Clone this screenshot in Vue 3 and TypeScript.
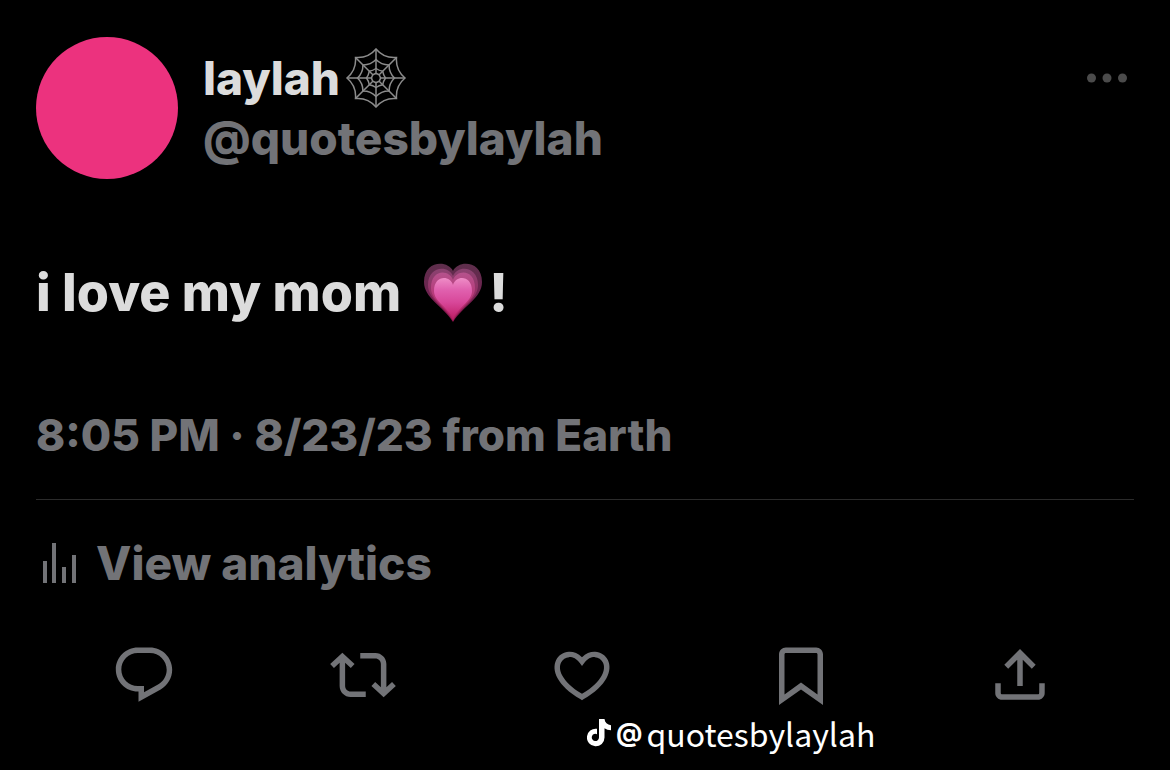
<script setup lang="ts">
interface Action {
  name: string
  path: string
}

const actions: Action[] = [
  {
    name: 'Reply',
    path: 'M1.751 10c0-4.42 3.584-8 8.005-8h4.366c4.49 0 8.129 3.64 8.129 8.13 0 2.96-1.607 5.68-4.196 7.11l-8.054 4.46v-3.69h-.067c-4.49.1-8.183-3.51-8.183-8.01zm8.005-6c-3.317 0-6.005 2.69-6.005 6 0 3.37 2.77 6.08 6.138 6.01l.351-.01h1.761v2.3l5.087-2.81c1.951-1.08 3.163-3.13 3.163-5.36 0-3.39-2.744-6.13-6.129-6.13H9.756z',
  },
  {
    name: 'Repost',
    path: 'M4.5 3.88l4.432 4.14-1.364 1.46L5.5 7.55V16c0 1.1.896 2 2 2H13v2H7.5c-2.209 0-4-1.79-4-4V7.55L1.432 9.48.068 8.02 4.5 3.88zM16.5 6H11V4h5.5c2.209 0 4 1.79 4 4v8.45l2.068-1.93 1.364 1.46-4.432 4.14-4.432-4.14 1.364-1.46 2.068 1.93V8c0-1.1-.896-2-2-2z',
  },
  {
    name: 'Like',
    path: 'M16.697 5.5c-1.222-.06-2.679.51-3.89 2.16l-.805 1.09-.806-1.09C9.984 6.01 8.526 5.44 7.304 5.5c-1.243.07-2.349.78-2.91 1.91-.552 1.12-.633 2.78.479 4.82 1.074 1.97 3.257 4.27 7.129 6.61 3.87-2.34 6.052-4.64 7.126-6.61 1.111-2.04 1.03-3.7.477-4.82-.561-1.13-1.666-1.84-2.908-1.91zm4.187 7.69c-1.351 2.48-4.001 5.12-8.379 7.67l-.503.3-.504-.3c-4.379-2.55-7.029-5.19-8.382-7.67-1.36-2.5-1.41-4.86-.514-6.67.887-1.79 2.647-2.91 4.601-3.01 1.651-.09 3.368.56 4.798 2.01 1.429-1.45 3.146-2.1 4.796-2.01 1.954.1 3.714 1.22 4.601 3.01.896 1.81.846 4.17-.514 6.67z',
  },
  {
    name: 'Bookmark',
    path: 'M4 4.5C4 3.12 5.119 2 6.5 2h11C18.881 2 20 3.12 20 4.5v18.44l-8-5.71-8 5.71V4.5zM6.5 4c-.276 0-.5.22-.5.5v14.56l6-4.29 6 4.29V4.5c0-.28-.224-.5-.5-.5h-11z',
  },
  {
    name: 'Share',
    path: 'M12 2.59l5.7 5.7-1.41 1.42L13 6.41V16h-2V6.41l-3.3 3.3-1.41-1.42L12 2.59zM21 15l-.02 3.51c0 1.38-1.12 2.49-2.5 2.49H5.5C4.11 21 3 19.88 3 18.5V15h2v3.5c0 .28.22.5.5.5h12.98c.28 0 .5-.22.5-.5L19 15h2z',
  },
]

const point = (radius: number, eighths: number): string => {
  const angle = (eighths * Math.PI) / 4
  return `${(30 + radius * Math.sin(angle)).toFixed(2)} ${(30 - radius * Math.cos(angle)).toFixed(2)}`
}

// One closed thread of the web; sag is the radius its curves are pulled to.
const thread = (radius: number, sag: number): string => {
  let d = `M${point(radius, 0)}`
  for (let i = 0; i < 8; i++) d += `Q${point(sag, i + 0.5)} ${point(radius, i + 1)}`
  return d + 'Z'
}

const threads: string[] = [thread(29, 21), thread(18.5, 14), thread(9.5, 8), thread(4.5, 4.5)]
const spokes: string = Array.from({ length: 8 }, (_, i) => `M${point(4.5, i)}L${point(29, i)}`).join('')
</script>

<template>
  <main class="page">
    <article class="post">
      <header class="head">
        <div class="avatar"></div>
        <div class="who">
          <div class="name">
            <span>laylah</span>
            <svg class="web" viewBox="0 0 60 60" aria-hidden="true">
              <path v-for="(t, i) in threads" :key="i" :d="t" />
              <path :d="spokes" />
            </svg>
          </div>
          <div class="handle">@quotesbylaylah</div>
        </div>
        <button class="more" type="button" aria-label="More">
          <svg viewBox="0 0 42 12" aria-hidden="true">
            <circle cx="5.5" cy="6" r="4.5" />
            <circle cx="21" cy="6" r="4.5" />
            <circle cx="36.5" cy="6" r="4.5" />
          </svg>
        </button>
      </header>

      <p class="body">
        <span>i love my mom</span>
        <svg class="pulse" viewBox="0 0 60 60" aria-hidden="true">
          <defs>
            <linearGradient id="h1" x1="0" y1="0" x2="0" y2="1">
              <stop offset="0" stop-color="#5e2f4c" />
              <stop offset="0.5" stop-color="#6e2350" />
              <stop offset="1" stop-color="#8c1048" />
            </linearGradient>
            <linearGradient id="h2" x1="0" y1="0" x2="0" y2="1">
              <stop offset="0" stop-color="#8a4370" />
              <stop offset="1" stop-color="#a01a58" />
            </linearGradient>
            <linearGradient id="h3" x1="0" y1="0" x2="0" y2="1">
              <stop offset="0" stop-color="#b5528c" />
              <stop offset="1" stop-color="#b81f64" />
            </linearGradient>
            <linearGradient id="h4" x1="0" y1="0" x2="0" y2="1">
              <stop offset="0" stop-color="#ee8cc6" />
              <stop offset="0.3" stop-color="#e060ae" />
              <stop offset="0.6" stop-color="#d8489a" />
              <stop offset="1" stop-color="#c02068" />
            </linearGradient>
          </defs>
          <path fill="url(#h1)" d="M30 8C25 -3 1 -3 1 19C1 35 20 43 30 59C40 43 59 35 59 19C59 -3 35 -3 30 8Z" />
          <path fill="url(#h2)" d="M30 13C26 2 5 2 5 22C5 36 21 43 30 58C39 43 55 36 55 22C55 2 34 2 30 13Z" />
          <path fill="url(#h3)" d="M30 17C26 6 8 6 8 25C8 37 22 43 30 57C38 43 52 37 52 25C52 6 34 6 30 17Z" />
          <path fill="url(#h4)" d="M30 22C27 12 11 12 11 28C11 38 23 43 30 55C37 43 49 38 49 28C49 12 33 12 30 22Z" />
        </svg>
        <span>!</span>
      </p>

      <p class="meta">8:05 PM · 8/23/23 from Earth</p>

      <a class="analytics" href="#analytics">
        <svg viewBox="0 0 34 42" aria-hidden="true">
          <path d="M0 19h4v22H0zM9 1h4v40H9zM19 25h4v16h-4zM29 13h4v28h-4z" />
        </svg>
        <span>View analytics</span>
      </a>

      <nav class="actions" aria-label="Post actions">
        <button v-for="a in actions" :key="a.name" type="button" :aria-label="a.name">
          <svg viewBox="0 0 24 24" aria-hidden="true"><path :d="a.path" /></svg>
        </button>
      </nav>
    </article>

    <footer class="credit">
      <svg viewBox="0 0 24 28" aria-hidden="true">
        <path d="M12 0h5.500c.4 3.600 2.800 5.800 6.500 6.200v5c-2.600 0-4.700-.7-6.500-2V18.500A8.800 8.800 0 1 1 10 9.800v5.400A3.600 3.600 0 1 0 12 18.500Z" />
      </svg>
      <span class="at">@</span>
      <span>quotesbylaylah</span>
    </footer>
  </main>
</template>

<style>
html,
body {
  background: #000;
}
</style>

<style scoped>
.page {
  box-sizing: border-box;
  min-height: 100vh;
  padding: 37px 36px 8px;
  background: #000;
  color: #dcdcdc;
  font-family: Inter, "Liberation Sans", sans-serif;
  font-size: 46px;
  font-weight: 800;
  line-height: 60px;
}

.head {
  display: flex;
  align-items: flex-start;
}

.avatar {
  flex: none;
  width: 142px;
  height: 142px;
  border-radius: 50%;
  background: #ec327e;
}

.who {
  flex: 1;
  margin: 11px 0 0 25px;
}

.name {
  display: flex;
  align-items: center;
  gap: 6px;
}

.web {
  width: 60px;
  height: 60px;
  fill: none;
  stroke: #8c8c8c;
  stroke-width: 1.5;
}

.handle,
.meta,
.analytics {
  color: #727377;
}

button {
  padding: 0;
  border: 0;
  background: none;
  color: #727377;
  cursor: pointer;
}

button svg {
  display: block;
  fill: currentColor;
}

.more {
  margin: 35px 6px 0 0;
  color: #4b4b4b;
}

.more svg {
  width: 42px;
  height: 12px;
}

.body {
  display: flex;
  align-items: center;
  margin: 84px 0 0;
  font-size: 52px;
}

.pulse {
  width: 60px;
  height: 60px;
  margin: 0 6px 0 22px;
}

.meta {
  margin: 82px 0 0;
  padding-bottom: 34px;
  border-bottom: 1px solid #2b2b2b;
  font-size: 44px;
}

.analytics {
  display: flex;
  align-items: center;
  gap: 19px;
  margin-top: 33px;
  padding-left: 7px;
  text-decoration: none;
}

.analytics svg {
  width: 34px;
  height: 42px;
  fill: currentColor;
}

.actions {
  display: grid;
  grid-template-columns: repeat(5, 1fr);
  justify-items: center;
  margin: 49px 4px 0 -2px;
}

.actions svg {
  width: 66px;
  height: 66px;
}

.credit {
  display: flex;
  align-items: center;
  margin: 6px 0 0 551px;
  color: #fff;
  font-family: "Noto Sans CJK SC", "Noto Sans", sans-serif;
  font-size: 32px;
  font-weight: 400;
  line-height: 38px;
}

.credit svg {
  width: 24px;
  height: 28px;
  fill: currentColor;
}

.at {
  margin: 0 4px 0 5px;
  font-family: Inter, sans-serif;
  font-size: 26px;
  font-weight: 700;
}
</style>
